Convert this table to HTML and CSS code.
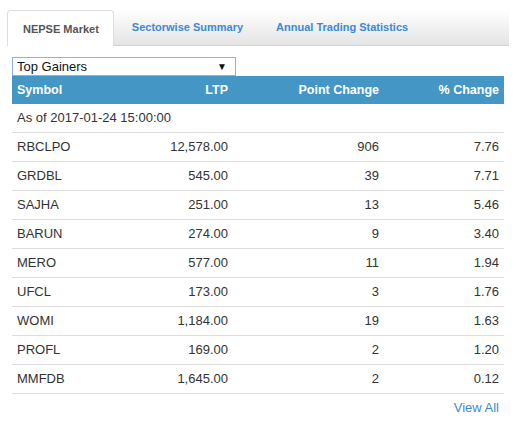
FILE: index.html
```html
<!DOCTYPE html>
<html>
<head>
<meta charset="utf-8">
<link rel="stylesheet" href="styles.css">
</head>
<body>
<div class="widget">
  <div class="tabs">
    <div class="tab active">NEPSE Market</div>
    <div class="tab">Sectorwise Summary</div>
    <div class="tab">Annual Trading Statistics</div>
  </div>
  <div class="panel">
    <div class="select"><span>Top Gainers</span><span class="arrow">▼</span></div>
    <table class="market">
      <thead>
        <tr><th class="sym">Symbol</th><th>LTP</th><th>Point Change</th><th>% Change</th></tr>
      </thead>
      <tbody>
        <tr><td class="sym" colspan="4">As of 2017-01-24 15:00:00</td></tr>
        <tr><td class="sym">RBCLPO</td><td>12,578.00</td><td>906</td><td>7.76</td></tr>
        <tr><td class="sym">GRDBL</td><td>545.00</td><td>39</td><td>7.71</td></tr>
        <tr><td class="sym">SAJHA</td><td>251.00</td><td>13</td><td>5.46</td></tr>
        <tr><td class="sym">BARUN</td><td>274.00</td><td>9</td><td>3.40</td></tr>
        <tr><td class="sym">MERO</td><td>577.00</td><td>11</td><td>1.94</td></tr>
        <tr><td class="sym">UFCL</td><td>173.00</td><td>3</td><td>1.76</td></tr>
        <tr><td class="sym">WOMI</td><td>1,184.00</td><td>19</td><td>1.63</td></tr>
        <tr><td class="sym">PROFL</td><td>169.00</td><td>2</td><td>1.20</td></tr>
        <tr><td class="sym">MMFDB</td><td>1,645.00</td><td>2</td><td>0.12</td></tr>
      </tbody>
    </table>
    <div class="more"><a class="view-all">View All</a></div>
  </div>
</div>
</body>
</html>
```
FILE: styles.css
```css
html, body {
  margin: 0;
  padding: 0;
  background: #fff;
}
body {
  font-family: "Liberation Sans", Arial, sans-serif;
  color: #333;
  font-size: 13px;
}
.widget {
  margin: 10px 7px 0 7px;
}
.tabs {
  display: flex;
  height: 36px;
  background: linear-gradient(to bottom, #ffffff 0%, #e4e4e4 100%);
  border-bottom: 1px solid #d2d2d2;
  box-sizing: border-box;
}
.tab {
  padding: 0 15px;
  margin-right: 3px;
  font-size: 11px;
  font-weight: bold;
  color: #3b8ad6;
  line-height: 35px;
  white-space: nowrap;
}
.tab.active {
  background: #fff;
  color: #555;
  border: 1px solid #ddd;
  border-bottom: none;
  border-radius: 4px 4px 0 0;
  margin-bottom: -1px;
  padding: 0 14px 0 15px;
  line-height: 36px;
}
.panel {
  padding: 11px 5px 0 5px;
}
.select {
  width: 224px;
  height: 19px;
  box-sizing: border-box;
  border: 1px solid #8fb0e0;
  display: flex;
  align-items: center;
  justify-content: space-between;
  padding: 0 4px 0 4px;
  font-size: 13px;
  color: #111;
}
.arrow {
  font-size: 10px;
  margin-right: 4px;
}
.market {
  width: 100%;
  border-collapse: collapse;
  table-layout: fixed;
}
.market th {
  background: #4496c4;
  color: #fff;
  font-weight: bold;
  font-size: 12.5px;
  text-align: right;
  padding: 4px 5px;
  height: 28px;
  line-height: 20px;
  box-sizing: border-box;
}
.market td {
  text-align: right;
  padding: 4px 5px;
  line-height: 20px;
  border-bottom: 1px solid #ddd;
}
.market .sym {
  text-align: left;
}
.market th:nth-child(1) { width: 110px; }
.market th:nth-child(2) { width: 111px; }
.market th:nth-child(3) { width: 151px; }
.more {
  display: flex;
  justify-content: flex-end;
  padding: 4px 5px;
  line-height: 20px;
}
.view-all {
  color: #3b8ad6;
  font-size: 13px;
}
```
